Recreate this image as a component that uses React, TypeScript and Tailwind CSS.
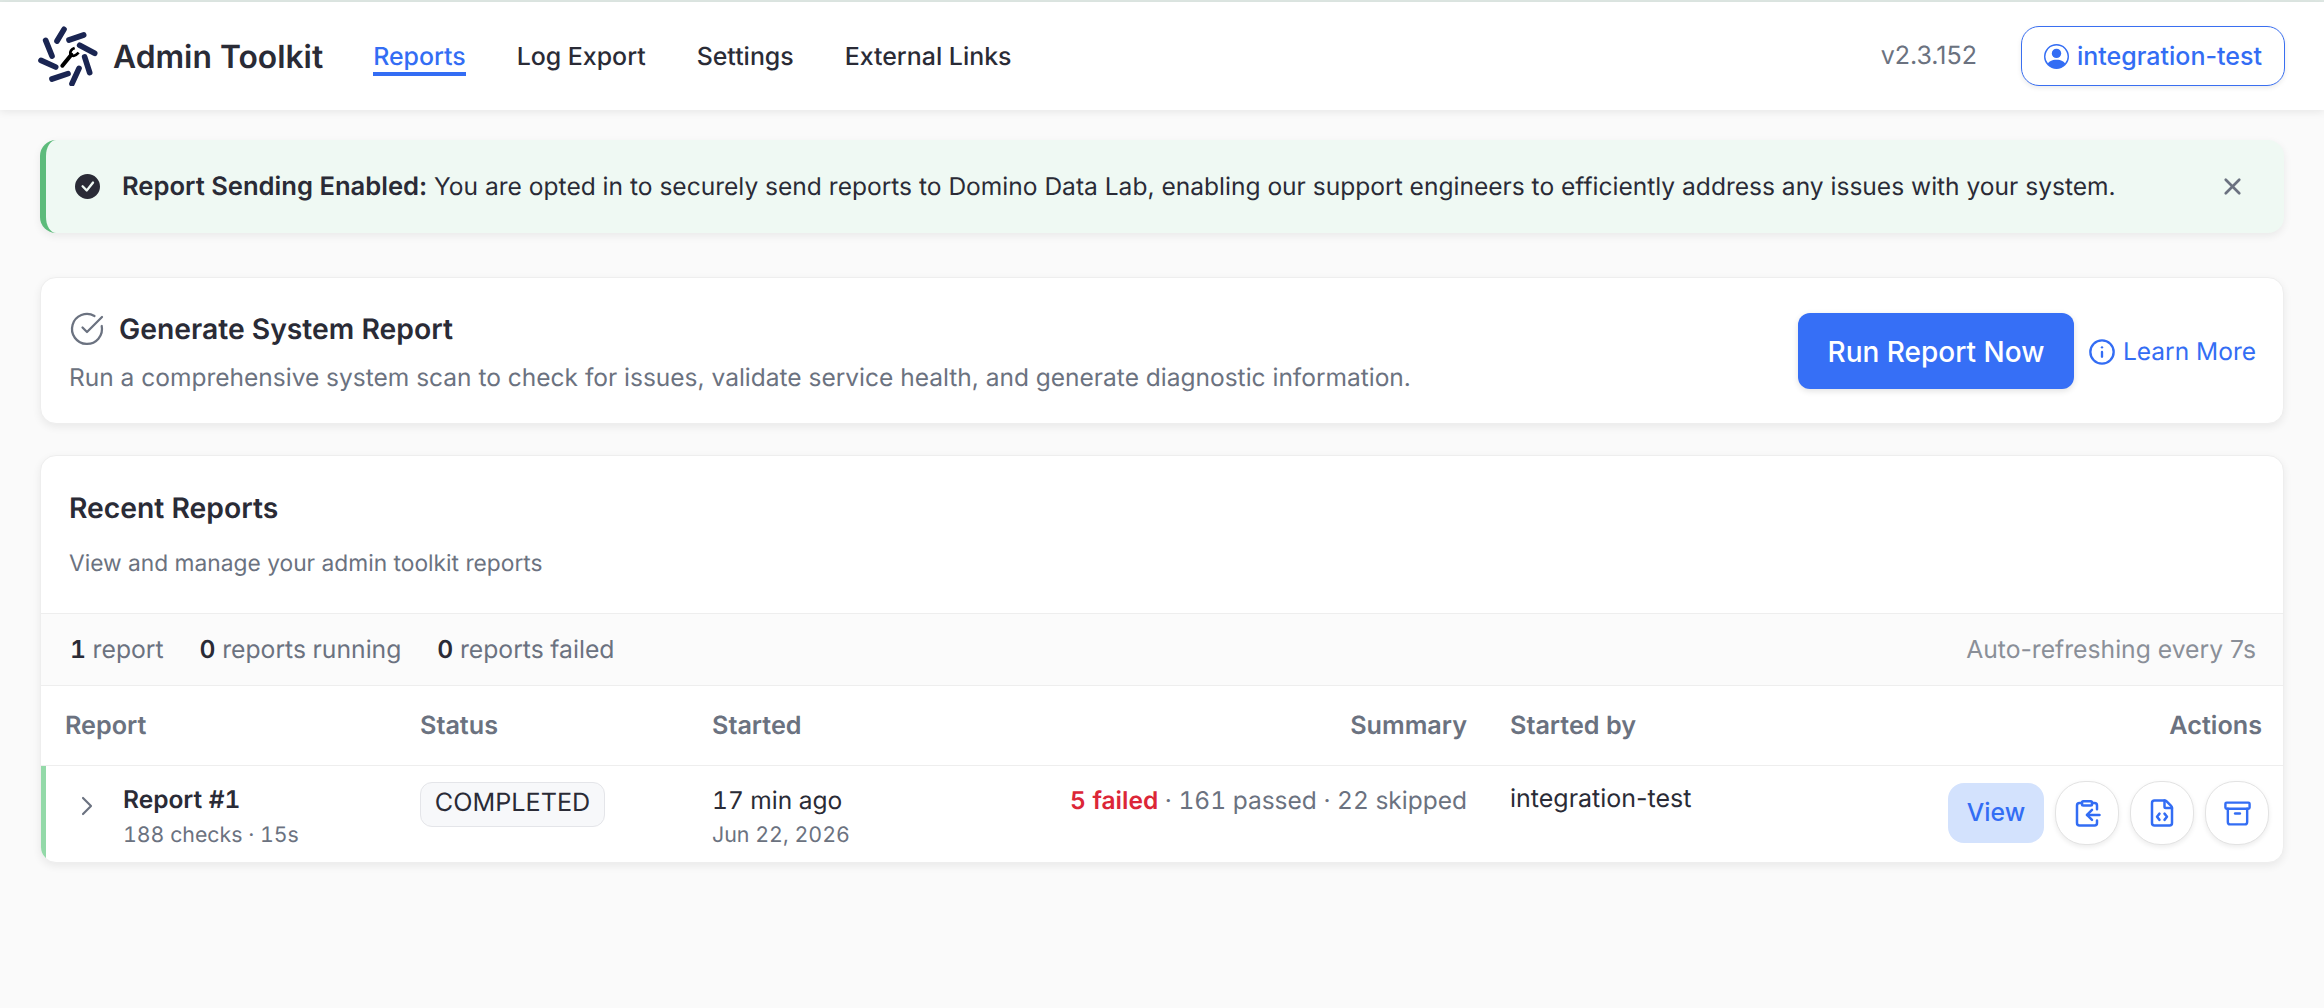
import React from "react";
import { X, CircleCheckBig, Info, ChevronRight, FileCode, Archive } from "lucide-react";
import { BsPersonCircle, BsCheckCircleFill } from "react-icons/bs";

function Logo() {
  const rods = [
    [133, 55, 112, 90],
    [192, 72, 148, 87],
    [180, 103, 225, 127],
    [195, 138, 210, 185],
    [178, 172, 157, 218],
    [145, 188, 97, 204],
    [108, 168, 64, 148],
    [78, 88, 97, 135],
  ];
  return (
    <svg viewBox="55 45 180 180" className="w-[60px] h-[60px] shrink-0">
      {rods.map((r, i) => (
        <line key={i} x1={r[0]} y1={r[1]} x2={r[2]} y2={r[3]} stroke="#1a2552" strokeWidth="17" strokeLinecap="round" />
      ))}
      <line x1="128" y1="164" x2="155" y2="131" stroke="#000" strokeWidth="12" strokeLinecap="round" />
      <path d="M165 111 Q150 116 152 130 Q162 141 177 125" fill="none" stroke="#000" strokeWidth="8" />
    </svg>
  );
}

function ClipArrow() {
  return (
    <svg viewBox="0 0 24 24" fill="none" stroke="#336df4" strokeWidth="2" strokeLinecap="round" strokeLinejoin="round" className="w-[30px] h-[30px]">
      <rect x="8" y="2.5" width="8" height="3.5" rx="1" />
      <path d="M8 4H6a2 2 0 0 0-2 2v14a2 2 0 0 0 2 2h12a2 2 0 0 0 2-2v-2" />
      <path d="M16 4h2a2 2 0 0 1 2 2v3" />
      <path d="M22 13.5H12" />
      <path d="M16 9.5l-4 4 4 4" />
    </svg>
  );
}

function RoundBtn({ children }: { children: React.ReactNode }) {
  return (
    <button className="w-[64px] h-[64px] rounded-[30px] bg-white border border-[#e3e3e3] shadow-[0_2px_5px_rgba(0,0,0,0.08)] flex items-center justify-center">
      {children}
    </button>
  );
}

const headCell = "text-[25.2px] font-semibold text-[#6b7280] pt-[3px]";

export default function App() {
  return (
    <div className="min-h-[1008px] bg-[#fafafa] font-['Inter',sans-serif] text-[#2a2b36] [text-rendering:geometricPrecision]">
      <div className="h-[2px] bg-[#dfe8e4]" />
      <header className="h-[108px] bg-white shadow-[0_2px_8px_rgba(0,0,0,0.08)] flex items-center pl-[38px] pr-[39px] relative">
        <Logo />
        <span className="ml-[15px] pt-[2px] text-[31.8px] font-semibold">Admin Toolkit</span>
        <nav className="ml-[50px] pt-[3px] flex items-center gap-[51px] text-[24.9px] font-medium">
          <a className="relative text-[#336df4]">
            Reports
            <span className="absolute left-0 right-0 top-[33px] h-[4px] bg-[#336df4]" />
          </a>
          <a>Log Export</a>
          <a>Settings</a>
          <a>External Links</a>
        </nav>
        <span className="ml-auto pt-[2px] text-[25px] text-[#6b7280]">v2.3.152</span>
        <button className="ml-[44px] h-[60px] w-[264px] rounded-[18px] border-[1.5px] border-[#3a6ff0] bg-white shadow-[0_2px_5px_rgba(0,0,0,0.08)] flex items-center justify-center gap-[8px] text-[#336df4] text-[25px] font-medium">
          <BsPersonCircle className="w-[25px] h-[25px]" />
          <span className="pt-[2px]">integration-test</span>
        </button>
      </header>

      <main className="px-[40px] pt-[30px]">
        <div className="h-[93px] rounded-[16px] border-l-[6px] border-[#5dbb7b] bg-[#eff9f3] shadow-[0_3px_8px_rgba(0,0,0,0.07)] flex items-center pl-[29px] pr-[38px]">
          <BsCheckCircleFill className="w-[25px] h-[25px] text-[#2a2b36] shrink-0" />
          <p className="ml-[22px] pt-[2px] text-[24.55px]">
            <b className="font-semibold text-[25.6px]">Report Sending Enabled:</b> You are opted in to securely send reports to Domino Data Lab, enabling our support engineers to efficiently address any issues with your system.
          </p>
          <X className="ml-auto w-[27px] h-[27px] text-[#6b7280] shrink-0" strokeWidth={2.4} />
        </div>

        <section className="mt-[44px] h-[147px] rounded-[16px] bg-white border border-[#eeeeee] shadow-[0_3px_8px_rgba(0,0,0,0.07)] flex items-center pl-[28px] pr-[27px]">
          <div className="pt-[3px]">
            <div className="flex items-center gap-[14px]">
              <CircleCheckBig className="w-[36px] h-[36px] text-[#6b7280]" strokeWidth={1.5} />
              <h2 className="text-[28.3px] font-semibold">Generate System Report</h2>
            </div>
            <p className="mt-[9px] text-[24.5px] text-[#6b7280]">
              Run a comprehensive system scan to check for issues, validate service health, and generate diagnostic information.
            </p>
          </div>
          <button className="ml-auto w-[276px] h-[76px] pt-[2px] rounded-[12px] bg-[#366ff6] text-white text-[28px] font-medium shadow-[0_2px_6px_rgba(0,0,0,0.12)]">
            Run Report Now
          </button>
          <a className="ml-[14px] pt-[2px] flex items-center gap-[7px] text-[#336df4] text-[24.5px]">
            <Info className="w-[28px] h-[28px]" strokeWidth={2} />
            Learn More
          </a>
        </section>

        <section className="mt-[31px] h-[408px] rounded-[16px] bg-white border border-[#eeeeee] shadow-[0_3px_8px_rgba(0,0,0,0.07)] overflow-hidden flex flex-col">
          <div className="h-[157px] pl-[28px] pt-[35px]">
            <h2 className="text-[28.3px] font-semibold leading-[34px]">Recent Reports</h2>
            <p className="mt-[25px] text-[22.75px] leading-[28px] text-[#6b7280]">View and manage your admin toolkit reports</p>
          </div>
          <div className="h-[73px] bg-[#fbfbfb] border-y border-[#eeeeee] flex items-center pl-[29px] pr-[27px] text-[24.7px] text-[#6b7280]">
            <span className="mr-[36px] tabular-nums"><b className="font-semibold text-[#2a2b36]">1</b> report</span>
            <span className="mr-[36px] tabular-nums"><b className="font-semibold text-[#2a2b36]">0</b> reports running</span>
            <span className="tabular-nums"><b className="font-semibold text-[#2a2b36]">0</b> reports failed</span>
            <span className="ml-auto text-[#8a8f98]">Auto-refreshing every 7s</span>
          </div>
          <div className="h-[80px] border-b border-[#eeeeee] grid grid-cols-[356px_292px_300px_499px_1fr_400px] items-center">
            <span className={`${headCell} pl-[24px]`}>Report</span>
            <span className={`${headCell} pl-[23px]`}>Status</span>
            <span className={`${headCell} pl-[23px]`}>Started</span>
            <span className={`${headCell} text-right pr-[21px]`}>Summary</span>
            <span className={`${headCell} pl-[22px]`}>Started by</span>
            <span className={`${headCell} pr-[21px] text-right`}>Actions</span>
          </div>
          <div className="flex-1 shadow-[inset_5px_0_0_#93d9a8] grid grid-cols-[356px_292px_300px_499px_1fr_400px] items-start">
            <div className="flex items-start pl-[30px]">
              <ChevronRight className="mt-[24px] w-[32px] h-[32px] text-[#6b7280] shrink-0" strokeWidth={1.6} />
              <div className="ml-[20px] pt-[18px] tabular-nums">
                <div className="text-[24.5px] leading-[30px] font-semibold">Report #1</div>
                <div className="mt-[7px] text-[21.3px] leading-[28px] text-[#6b7280]">188 checks · 15s</div>
              </div>
            </div>
            <div className="pl-[23px] pt-[16px]">
              <span className="inline-flex items-center h-[45px] w-[185px] pb-[1px] justify-center rounded-[12px] border border-[#e4e5e9] bg-[#f7f8fa] text-[25.2px]">COMPLETED</span>
            </div>
            <div className="pl-[23px] pt-[19px] tabular-nums">
              <div className="text-[24.5px] leading-[30px]">17 min ago</div>
              <div className="mt-[6px] text-[21.4px] leading-[28px] text-[#6b7280]">Jun 22, 2026</div>
            </div>
            <div className="pt-[19px] pr-[21px] text-right text-[24.5px] leading-[30px] text-[#6b7280] tabular-nums">
              <b className="font-semibold text-[#dc2637]">5 failed</b> · 161 passed · 22 skipped
            </div>
            <div className="pl-[22px] pt-[18px] text-[25px] leading-[30px]">integration-test</div>
            <div className="flex items-center justify-end gap-[11px] pr-[14px] pt-[15px]">
              <button className="w-[96px] h-[60px] rounded-[16px] bg-[#d3e2fd] text-[#336df4] text-[24.7px] font-medium">View</button>
              <RoundBtn><ClipArrow /></RoundBtn>
              <RoundBtn><FileCode className="w-[30px] h-[30px] text-[#336df4]" strokeWidth={2} /></RoundBtn>
              <RoundBtn><Archive className="w-[29px] h-[29px] text-[#336df4]" strokeWidth={2} /></RoundBtn>
            </div>
          </div>
        </section>
      </main>
    </div>
  );
}
